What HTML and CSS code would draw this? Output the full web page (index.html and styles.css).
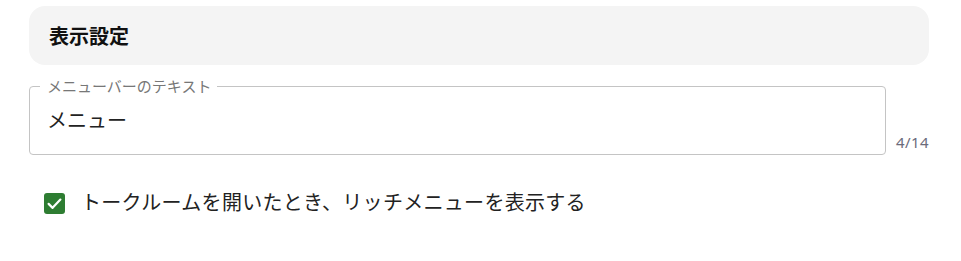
FILE: index.html
```html
<!DOCTYPE html>
<html lang="ja">
<head>
<meta charset="utf-8">
<link rel="stylesheet" href="styles.css">
</head>
<body>
<div class="page">
  <div class="section-head">表示設定</div>
  <div class="field-row">
    <fieldset class="field">
      <legend class="field-label">メニューバーのテキスト</legend>
      <div class="field-value">メニュー</div>
    </fieldset>
    <div class="counter">4/14</div>
  </div>
  <label class="check-row">
    <span class="checkbox">
      <svg viewBox="0 0 20 20" width="19" height="19"><path d="M3.8 10.4 L8 14.6 L16.2 5.9" fill="none" stroke="#fff" stroke-width="2.3" stroke-linecap="round" stroke-linejoin="round"/></svg>
    </span>
    <span class="check-label">トークルームを開いたとき、リッチメニューを表示する</span>
  </label>
</div>
</body>
</html>
```
FILE: styles.css
```css
* { box-sizing: border-box; }
html, body { margin: 0; padding: 0; background: #fff; }
body {
  font-family: "Noto Sans CJK JP", "Noto Sans", sans-serif;
  color: #1a1a1a;
}
.page {
  width: 900px;
  margin-left: 29px;
  padding-top: 6px;
}
.section-head {
  height: 59px;
  background: #f4f4f4;
  border-radius: 16px;
  padding-left: 20px;
  display: flex;
  align-items: center;
  font-size: 20px;
  font-weight: 700;
  color: #111;
}
.field-row {
  display: flex;
  align-items: flex-end;
  margin-top: 12px;
}
.field {
  width: 857px;
  height: 78px;
  margin: 0;
  padding: 0 0 0 10px;
  border: 1px solid #c4c4c4;
  border-radius: 4px;
}
.field-label {
  padding: 0 6px 0 7px;
  margin-left: 0;
  font-size: 15px;
  line-height: 18px;
  color: #777;
}
.field-value {
  padding-left: 7px;
  padding-top: 12px;
  font-size: 20px;
  line-height: 26px;
  color: #222;
}
.counter {
  margin-left: 10px;
  margin-bottom: 4px;
  font-size: 15px;
  line-height: 18px;
  letter-spacing: 0.4px;
  color: #6b6b7b;
  font-family: "Noto Sans", sans-serif;
}
.check-row {
  display: flex;
  align-items: center;
  margin-top: 34px;
  margin-left: 15px;
}
.checkbox {
  width: 21px;
  height: 21px;
  border-radius: 3px;
  background: #2e7d32;
  display: flex;
  align-items: center;
  justify-content: center;
}
.check-label {
  margin-left: 16px;
  margin-bottom: 2px;
  font-size: 20px;
  line-height: 26px;
  letter-spacing: 0.3px;
  color: #222;
}
```
